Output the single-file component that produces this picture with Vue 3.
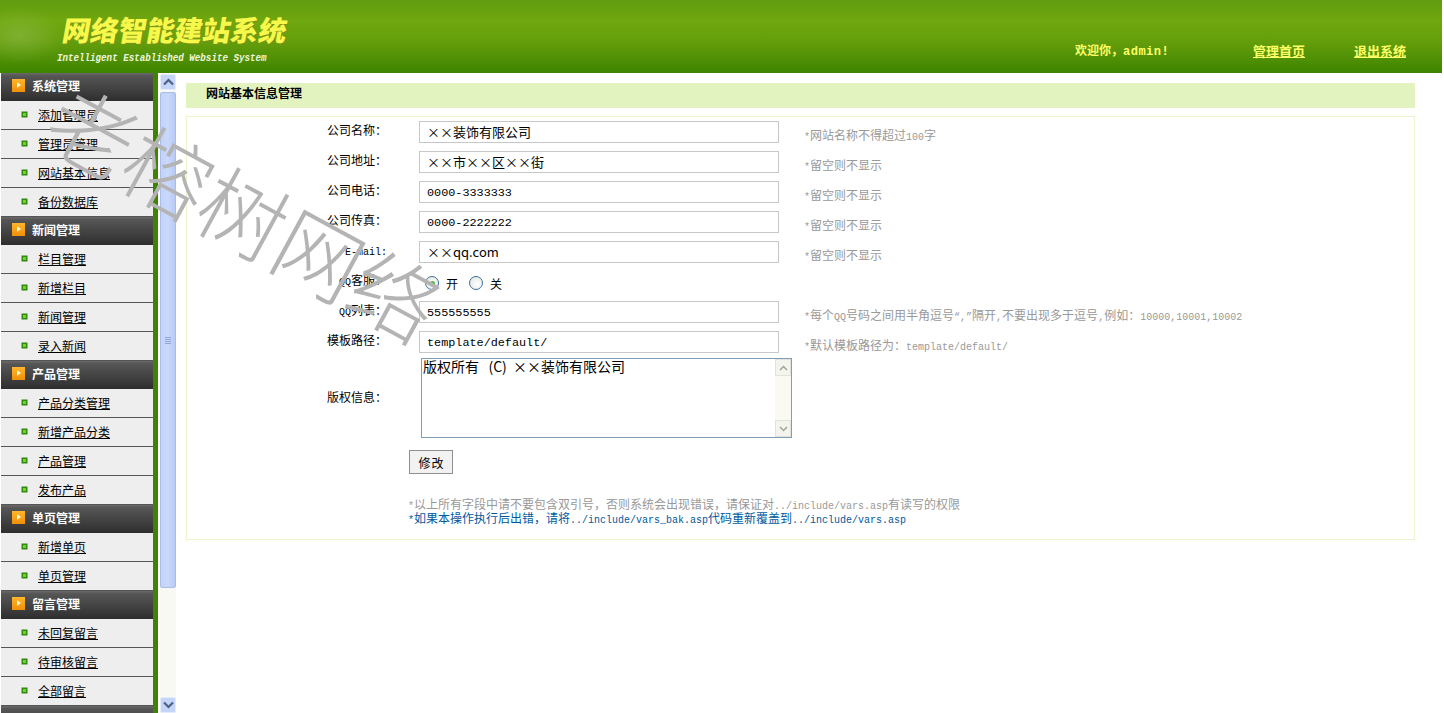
<template>
  <div class="page">
    <header class="top">
      <div class="logo">
        <div class="logo-cn">网络智能建站系统</div>
        <div class="logo-en">Intelligent Established Website System</div>
      </div>
      <div class="top-nav">
        <span class="welcome">欢迎你，<span class="welcome-name">admin!</span></span>
        <a href="#" class="nav-home">管理首页</a>
        <a href="#" class="nav-exit">退出系统</a>
      </div>
    </header>

    <div class="body">
      <aside class="side">
        <section v-for="(group, g) in menu" :key="g">
          <h3 class="side-head"><template v-if="group.title"><span class="head-icon"></span>{{ group.title }}</template></h3>
          <a v-for="item in group.items" :key="item" href="#" class="side-item"><span class="dot"></span><span class="side-link">{{ item }}</span></a>
        </section>
      </aside>

      <div class="scrollbar">
        <div class="sb-btn">
          <svg width="11" height="8" viewBox="0 0 11 8"><path d="M1 6.5 5.5 2 10 6.5" fill="none" stroke="#4d6185" stroke-width="2.2" /></svg>
        </div>
        <div class="sb-thumb"><span></span><span></span><span></span><span></span></div>
        <div class="sb-track"></div>
        <div class="sb-btn">
          <svg width="11" height="8" viewBox="0 0 11 8"><path d="M1 1.5 5.5 6 10 1.5" fill="none" stroke="#4d6185" stroke-width="2.2" /></svg>
        </div>
      </div>

      <main class="main">
        <div class="title-bar">网站基本信息管理</div>
        <div class="form-box">
          <div v-for="row in rows" :key="row.label" class="row" :class="{ tight: row.tight }">
            <label class="label">
              <span v-for="(r, i) in runs(row.label)" :key="i" :class="{ lat: r.lat }">{{ r.t }}</span>
            </label>
            <div v-if="row.radio" class="radios">
              <span class="radio on"><i></i></span><span class="radio-text">开</span>
              <span class="radio"></span><span class="radio-text">关</span>
            </div>
            <input v-else class="field" :class="{ cjk: row.cjk }" type="text" :value="row.value" />
            <div class="hint">
              <span v-for="(r, i) in runs(row.hint)" :key="i" :class="{ lat: r.lat }">{{ r.t }}</span>
            </div>
          </div>

          <div class="row copy-row">
            <label class="label copy-label">版权信息：</label>
            <div class="copy-box">
              <textarea class="copy-text" :value="copyright"></textarea>
              <div class="copy-bar">
                <div class="copy-btn"><svg width="9" height="6" viewBox="0 0 9 6"><path d="M1 5 4.5 1.5 8 5" fill="none" stroke="#9aa89a" stroke-width="1.5" /></svg></div>
                <div class="copy-btn"><svg width="9" height="6" viewBox="0 0 9 6"><path d="M1 1 4.5 4.5 8 1" fill="none" stroke="#9aa89a" stroke-width="1.5" /></svg></div>
              </div>
            </div>
          </div>

          <button class="submit" type="button">修改</button>

          <div class="notes">
            <p class="note-grey"><span v-for="(r, i) in runs(noteOne)" :key="i" :class="{ lat: r.lat }">{{ r.t }}</span></p>
            <p class="note-blue"><span v-for="(r, i) in runs(noteTwo)" :key="i" :class="{ lat: r.lat }">{{ r.t }}</span></p>
          </div>
        </div>
      </main>
    </div>

    <div class="watermark">老榕树网络</div>
  </div>
</template>

<script setup>
const menu = [
  { title: "系统管理", items: ["添加管理员", "管理员管理", "网站基本信息", "备份数据库"] },
  { title: "新闻管理", items: ["栏目管理", "新增栏目", "新闻管理", "录入新闻"] },
  { title: "产品管理", items: ["产品分类管理", "新增产品分类", "产品管理", "发布产品"] },
  { title: "单页管理", items: ["新增单页", "单页管理"] },
  { title: "留言管理", items: ["未回复留言", "待审核留言", "全部留言"] },
  { title: "", items: [] },
];

const emptyHint = "*留空则不显示";

const rows = [
  { label: "公司名称：", value: "××装饰有限公司", cjk: true, hint: "*网站名称不得超过100字" },
  { label: "公司地址：", value: "××市××区××街", cjk: true, hint: emptyHint },
  { label: "公司电话：", value: "0000-3333333", hint: emptyHint },
  { label: "公司传真：", value: "0000-2222222", hint: emptyHint },
  { label: "E-mail:", value: "××qq.com", cjk: true, hint: emptyHint },
  { label: "QQ客服：", radio: true, hint: "" },
  { label: "QQ列表：", value: "555555555", hint: "*每个QQ号码之间用半角逗号“,”隔开,不要出现多于逗号,例如：10000,10001,10002" },
  { label: "模板路径：", value: "template/default/", tight: true, hint: "*默认模板路径为：template/default/" },
];

const copyright = "版权所有   (C)  ××装饰有限公司";
const noteOne = "*以上所有字段中请不要包含双引号，否则系统会出现错误，请保证对../include/vars.asp有读写的权限";
const noteTwo = "*如果本操作执行后出错，请将../include/vars_bak.asp代码重新覆盖到../include/vars.asp";

// latin goes in the narrow mono face, like the half-width glyphs of the original
const runs = (text) =>
  (text.match(/[\x20-\x7e“”]+|[^\x20-\x7e“”]+/g) || []).map((t) => ({
    t,
    lat: /^[\x20-\x7e“”]/.test(t),
  }));
</script>

<style>
html,
body {
  margin: 0;
  background: #fff;
  overflow: hidden;
}
</style>

<style scoped>
.page {
  position: relative;
  width: 1444px;
  height: 713px;
  overflow: hidden;
  background: #fff;
  font-family: "Noto Sans CJK SC", sans-serif;
  font-size: 12px;
  color: #000;
}

.lat {
  display: inline-block;
  font-family: "Liberation Mono", monospace;
  font-size: 10px;
  line-height: 12px;
  white-space: pre;
  transform: scaleY(1.15);
}

.top {
  display: flex;
  justify-content: space-between;
  width: 1442px;
  height: 73px;
  background:
    radial-gradient(ellipse 44px 28px at 20px 36px, rgba(160, 198, 100, 0.4), rgba(160, 198, 100, 0)),
    linear-gradient(#5f9c10 0, #6fa70f 28%, #669f0c 55%, #3e8400 100%);
}

.logo {
  padding: 11px 0 0 57px;
}

.logo-cn {
  margin-left: 3px;
  font-size: 28px;
  line-height: 36px;
  font-weight: 900;
  color: #f7f94a;
  transform: skewX(-10deg);
  transform-origin: left bottom;
  white-space: nowrap;
  text-shadow: 1px 1px 0 #7d8f1d;
}

.logo-en {
  margin-top: 5px;
  font-family: "Liberation Mono", monospace;
  font-size: 9.2px;
  line-height: 12px;
  font-style: italic;
  font-weight: 700;
  color: #eef5dc;
  white-space: nowrap;
  transform: scaleY(1.25);
}

.top-nav {
  display: flex;
  align-items: center;
  height: 24px;
  margin-top: 38px;
  padding-right: 36px;
  color: #ffff66;
  font-weight: 700;
}

.welcome {
  width: 178px;
  margin-top: -1px;
}

.welcome-name {
  font-family: "Liberation Mono", monospace;
  font-size: 12px;
  letter-spacing: 0.5px;
}

.top-nav a {
  color: #ffff66;
  font-size: 13px;
}

.nav-exit {
  margin-left: 49px;
}

.body {
  display: flex;
  height: 640px;
}

.side {
  box-sizing: content-box;
  flex: none;
  width: 152px;
  margin-left: 1px;
  border-right: 5px solid #3e8400;
  overflow: hidden;
}

.side-head {
  display: flex;
  align-items: center;
  gap: 7px;
  box-sizing: border-box;
  height: 28px;
  margin: 0;
  padding: 0 0 3px 11px;
  font-size: 12px;
  font-weight: 700;
  color: #fff;
  background: linear-gradient(#6a6a6a 0, #565656 10%, #2e2e2e 100%);
}

.head-icon {
  position: relative;
  width: 13px;
  height: 13px;
  background: linear-gradient(#ffb52e, #f08f08);
}

.head-icon::after {
  content: "";
  position: absolute;
  left: 5px;
  top: 3px;
  border-left: 4px solid #fff6c8;
  border-top: 3.5px solid transparent;
  border-bottom: 3.5px solid transparent;
}

.side-item {
  display: flex;
  align-items: center;
  box-sizing: border-box;
  height: 29px;
  padding: 0 0 2px 21px;
  color: #000;
  text-decoration: none;
  background: #eee;
  border-bottom: 1px solid #555;
}

.dot {
  box-sizing: border-box;
  width: 5px;
  height: 5px;
  margin-right: 11px;
  background: #7ad21e;
  border: 1px solid #2f8a10;
  box-shadow: 0 0 0 0.5px #2f8a10;
}

.side-link {
  text-decoration: underline;
}

.scrollbar {
  display: flex;
  flex-direction: column;
  flex: none;
  width: 16px;
  margin-left: 2px;
  padding-top: 1px;
  background: #f8f9f2;
}

.sb-btn {
  display: flex;
  align-items: center;
  justify-content: center;
  flex: none;
  box-sizing: border-box;
  height: 16px;
  background: #c5d5f7;
  border: 1px solid #e4ebfb;
  border-radius: 2px;
}

.sb-thumb {
  display: flex;
  flex-direction: column;
  align-items: center;
  justify-content: center;
  gap: 1px;
  flex: none;
  box-sizing: border-box;
  height: 496px;
  margin-top: 2px;
  background: linear-gradient(90deg, #c3d3f9, #c9d8fb 50%, #b8caf4);
  border: 1px solid #a9bde8;
  border-radius: 2px;
}

.sb-thumb span {
  width: 6px;
  height: 1px;
  background: #8ea6d8;
}

.sb-track {
  flex: 1;
}

.main {
  flex: 1;
  padding: 10px 29px 0 10px;
}

.title-bar {
  box-sizing: border-box;
  height: 25px;
  padding-left: 20px;
  font-weight: 700;
  line-height: 19px;
  background: #e3f3c0;
}

.form-box {
  box-sizing: border-box;
  height: 424px;
  margin-top: 8px;
  padding-top: 4px;
  border: 1px solid #f2f2cf;
}

.row {
  display: flex;
  height: 22px;
  margin-bottom: 8px;
}

.row.tight {
  margin-bottom: 5px;
}

.label {
  flex: none;
  box-sizing: border-box;
  width: 200px;
  margin-right: 32px;
  text-align: right;
  line-height: 18px;
}

.field {
  flex: none;
  box-sizing: border-box;
  width: 360px;
  height: 22px;
  padding: 1px 7px 0;
  border: 1px solid #c8c8c8;
  outline: none;
  font-family: "Liberation Mono", monospace;
  font-size: 11.8px;
  color: #000;
  background: #fff;
}

.field.cjk {
  padding: 0 7px 2px;
  font-family: "Noto Sans CJK SC", sans-serif;
  font-size: 13px;
}

.radios {
  display: flex;
  align-items: center;
  flex: none;
  width: 360px;
  padding: 2px 0 0 6px;
  box-sizing: border-box;
}

.radio {
  display: flex;
  align-items: center;
  justify-content: center;
  box-sizing: border-box;
  width: 14px;
  height: 14px;
  border: 1px solid #3d7199;
  border-radius: 50%;
  background: radial-gradient(circle at 60% 60%, #fff, #dfe4e0);
}

.radio i {
  width: 5px;
  height: 5px;
  border-radius: 50%;
  background: #55b848;
}

.radio-text {
  margin: 0 11px 0 7px;
}

.hint {
  margin-left: 25px;
  padding-top: 5px;
  line-height: 18px;
  color: #999;
  white-space: nowrap;
}

.copy-row {
  height: 80px;
  margin-bottom: 12px;
}

.copy-label {
  line-height: 78px;
}

.copy-box {
  position: relative;
  box-sizing: border-box;
  width: 371px;
  height: 80px;
  margin-left: 2px;
  border: 1px solid #7f9db9;
  background: #fff;
}

.copy-text {
  display: block;
  box-sizing: border-box;
  width: 100%;
  height: 100%;
  padding: 0 20px 0 1px;
  border: none;
  outline: none;
  resize: none;
  overflow: hidden;
  font-family: "Noto Sans CJK SC", sans-serif;
  font-size: 14px;
  line-height: 15px;
  color: #000;
}

.copy-bar {
  position: absolute;
  top: 0;
  right: 0;
  bottom: 0;
  display: flex;
  flex-direction: column;
  justify-content: space-between;
  width: 16px;
  background: #fafaf3;
}

.copy-btn {
  display: flex;
  align-items: center;
  justify-content: center;
  height: 17px;
  background: #f4f4ee;
  border: 1px solid #e3e3da;
  box-sizing: border-box;
}

.submit {
  display: block;
  box-sizing: border-box;
  width: 44px;
  height: 24px;
  margin-left: 222px;
  padding: 0 0 0 1px;
  border: 1px solid #8f8f8f;
  background: #f2f2f2;
  font-family: "Noto Sans CJK SC", sans-serif;
  font-size: 12px;
  letter-spacing: 1px;
  color: #000;
}

.notes {
  margin: 23px 0 0 221px;
}

.notes p {
  height: 14px;
  margin: 0;
  line-height: 14px;
  white-space: nowrap;
}

.note-grey {
  color: #999;
}

.note-blue {
  color: #00599e;
}

.watermark {
  position: absolute;
  left: 30px;
  top: 163px;
  width: 430px;
  font-size: 86px;
  line-height: 96px;
  font-weight: 300;
  color: #b4b4b4;
  white-space: nowrap;
  transform: rotate(28.5deg);
  pointer-events: none;
}
</style>
